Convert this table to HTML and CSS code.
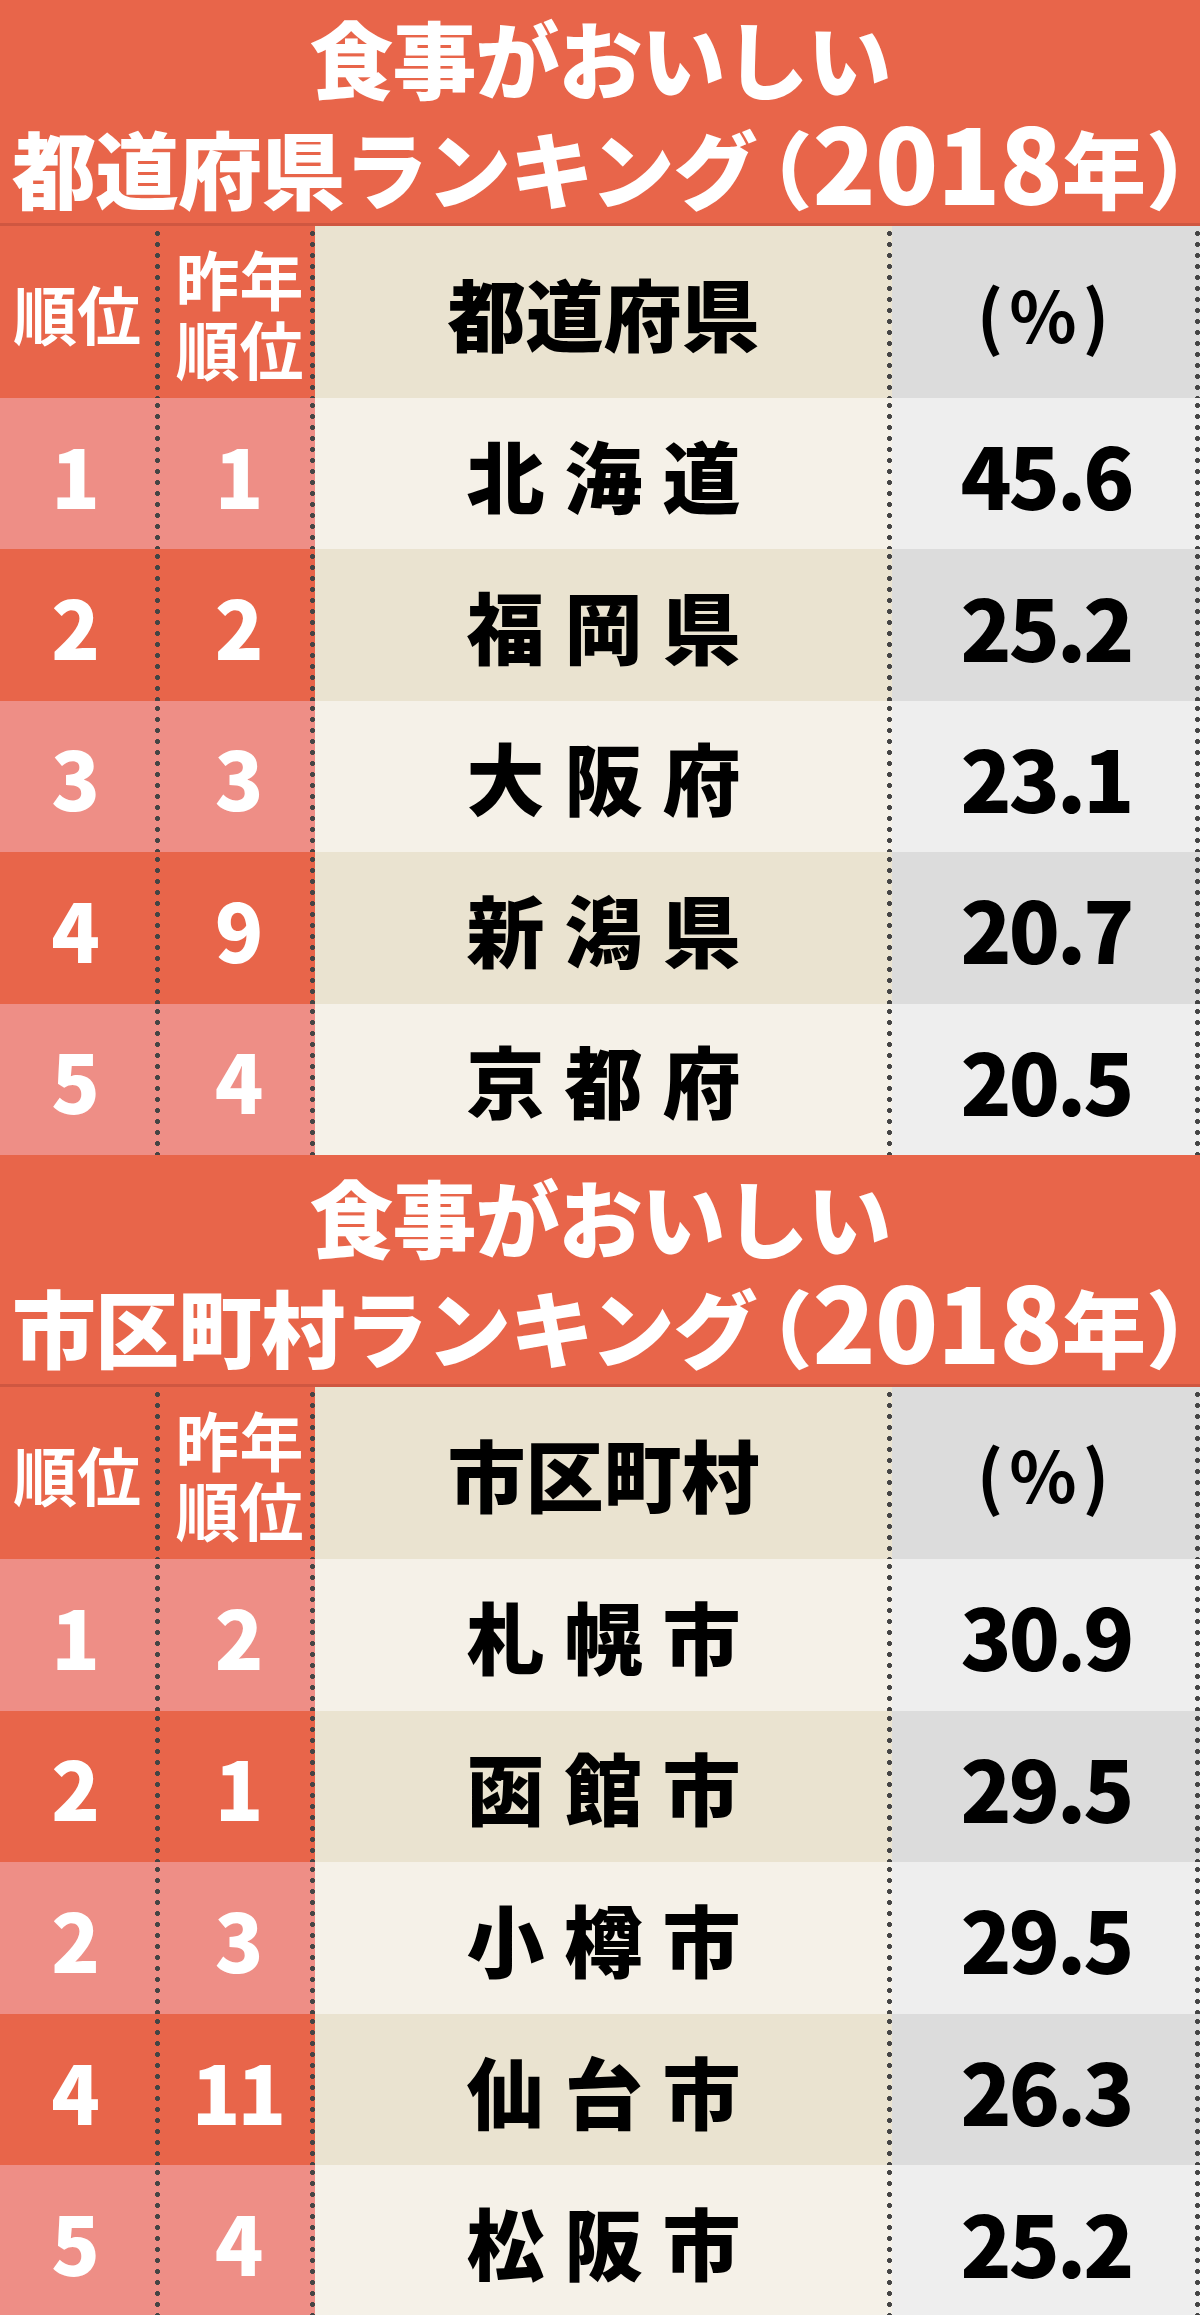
FILE: index.html
```html
<!DOCTYPE html>
<html lang="ja">
<head>
<meta charset="utf-8">
<title>食事がおいしい ランキング（2018年）</title>
<link rel="stylesheet" href="styles.css">
</head>
<body>
<div class="page">
  <section class="sec sec-a">
    <div class="title">
      <div class="tl">食事がおいしい</div>
      <div class="tl">都道府県ランキング<span class="yr">（<span class="dg">2018</span>年）</span></div>
    </div>
    <div class="row head">
      <div class="c c1"><span class="hw">順位</span></div>
      <div class="c c2"><span class="hw2">昨年<br>順位</span></div>
      <div class="c c3"><span class="hn">都道府県</span></div>
      <div class="c c4"><span class="hp">(%)</span></div>
    </div>
    <div class="row lt"><div class="c c1"><span class="n">1</span></div><div class="c c2"><span class="n">1</span></div><div class="c c3"><span class="nm">北海道</span></div><div class="c c4"><span class="v">45.6</span></div></div>
    <div class="row dk"><div class="c c1"><span class="n">2</span></div><div class="c c2"><span class="n">2</span></div><div class="c c3"><span class="nm">福岡県</span></div><div class="c c4"><span class="v">25.2</span></div></div>
    <div class="row lt"><div class="c c1"><span class="n">3</span></div><div class="c c2"><span class="n">3</span></div><div class="c c3"><span class="nm">大阪府</span></div><div class="c c4"><span class="v">23.1</span></div></div>
    <div class="row dk"><div class="c c1"><span class="n">4</span></div><div class="c c2"><span class="n">9</span></div><div class="c c3"><span class="nm">新潟県</span></div><div class="c c4"><span class="v">20.7</span></div></div>
    <div class="row lt"><div class="c c1"><span class="n">5</span></div><div class="c c2"><span class="n">4</span></div><div class="c c3"><span class="nm">京都府</span></div><div class="c c4"><span class="v">20.5</span></div></div>
  </section>
  <section class="sec sec-b">
    <div class="title">
      <div class="tl">食事がおいしい</div>
      <div class="tl">市区町村ランキング<span class="yr">（<span class="dg">2018</span>年）</span></div>
    </div>
    <div class="row head">
      <div class="c c1"><span class="hw">順位</span></div>
      <div class="c c2"><span class="hw2">昨年<br>順位</span></div>
      <div class="c c3"><span class="hn">市区町村</span></div>
      <div class="c c4"><span class="hp">(%)</span></div>
    </div>
    <div class="row lt"><div class="c c1"><span class="n">1</span></div><div class="c c2"><span class="n">2</span></div><div class="c c3"><span class="nm">札幌市</span></div><div class="c c4"><span class="v">30.9</span></div></div>
    <div class="row dk"><div class="c c1"><span class="n">2</span></div><div class="c c2"><span class="n">1</span></div><div class="c c3"><span class="nm">函館市</span></div><div class="c c4"><span class="v">29.5</span></div></div>
    <div class="row lt"><div class="c c1"><span class="n">2</span></div><div class="c c2"><span class="n">3</span></div><div class="c c3"><span class="nm">小樽市</span></div><div class="c c4"><span class="v">29.5</span></div></div>
    <div class="row dk"><div class="c c1"><span class="n">4</span></div><div class="c c2"><span class="n">11</span></div><div class="c c3"><span class="nm">仙台市</span></div><div class="c c4"><span class="v">26.3</span></div></div>
    <div class="row lt"><div class="c c1"><span class="n">5</span></div><div class="c c2"><span class="n">4</span></div><div class="c c3"><span class="nm">松阪市</span></div><div class="c c4"><span class="v">25.2</span></div></div>
  </section>
</div>
</body>
</html>
```

FILE: styles.css
```css
html, body {
  margin: 0;
  padding: 0;
  background: #f5f1e8;
}
body {
  font-family: "Noto Sans CJK JP", "Noto Sans", sans-serif;
}
.page {
  width: 1200px;
  height: 2315px;
  overflow: hidden;
}
.sec {
  display: flex;
  flex-direction: column;
}
.title {
  background: #e8654a;
  border-bottom: 3px solid #cf5741;
  color: #fff;
  font-weight: 900;
  font-size: 84px;
  text-align: center;
  box-sizing: border-box;
  padding-top: 6px;
}
.sec-a .title { height: 226px; }
.sec-b .title { height: 232px; padding-top: 10px; }
.tl {
  line-height: 102px;
  white-space: nowrap;
  letter-spacing: -1px;
}
.yr {
  font-feature-settings: "halt";
  letter-spacing: 0;
  margin-left: 14px;
}
.dg {
  font-size: 104px;
  letter-spacing: -1px;
  line-height: 1;
  vertical-align: -2px;
}
.row {
  display: grid;
  grid-template-columns: 160px 155px 577px 308px;
  height: 151.4px;
}
.sec-b .row { height: 151.6px; }
.row.head { height: 172px; }
.c {
  display: flex;
  align-items: center;
  justify-content: center;
  background-repeat: repeat-y;
  background-position: right 0 top 2px;
  background-size: 5px 11px;
  background-image: radial-gradient(circle, #444 2.2px, rgba(68,68,68,0) 2.8px);
}
.c1 { padding-right: 12px; box-sizing: border-box; }
.head .c1, .head .c2, .dk .c1, .dk .c2 { background-color: #e8654a; }
.lt .c1, .lt .c2 { background-color: #ee8e86; }
.head .c3, .dk .c3 { background-color: #eae3d0; }
.lt .c3 { background-color: #f5f1e8; }
.head .c4, .dk .c4 { background-color: #dcdcdc; }
.lt .c4 { background-color: #eeeeee; }

.hw {
  color: #fff;
  font-weight: 700;
  font-size: 64px;
  letter-spacing: 0;
  white-space: nowrap;
}
.head .c1 { padding-right: 6px; }
.hw2 {
  color: #fff;
  font-weight: 700;
  font-size: 64px;
  line-height: 70px;
  letter-spacing: 0;
  text-align: center;
  white-space: nowrap;
  margin-left: 4px;
}
.hn {
  color: #000;
  font-weight: 900;
  font-size: 78px;
  white-space: nowrap;
}
.hp {
  color: #000;
  font-weight: 700;
  font-size: 70px;
  letter-spacing: 6px;
}
.n {
  color: #fff;
  font-weight: 900;
  font-size: 80px;
  letter-spacing: -3px;
}
.nm {
  color: #000;
  font-weight: 900;
  font-size: 78px;
  letter-spacing: 20px;
  margin-right: -20px;
  white-space: nowrap;
}
.v {
  color: #000;
  font-weight: 900;
  font-size: 84px;
  letter-spacing: -3px;
}
```
